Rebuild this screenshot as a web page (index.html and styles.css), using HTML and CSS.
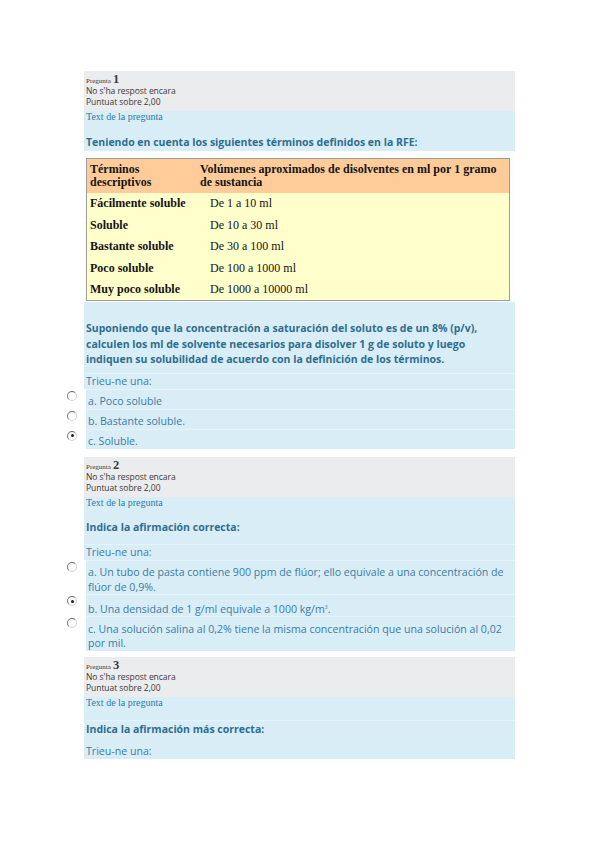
FILE: index.html
```html
<!DOCTYPE html>
<html lang="ca">
<head>
<meta charset="utf-8">
<title>Qüestionari</title>
<link rel="stylesheet" href="styles.css">
</head>
<body>
<div class="page">

  <section class="que q1">
    <div class="info">
      <div class="qno"><span class="lbl">Pregunta</span> <span class="num">1</span></div>
      <div class="state">No s'ha respost encara</div>
      <div class="grade">Puntuat sobre 2,00</div>
    </div>
    <div class="content">
      <div class="qtitle">Text de la pregunta</div>
      <p class="qtext lead">Teniendo en cuenta los siguientes términos definidos en la RFE:</p>
      <div class="tablewrap">
        <table class="sol">
          <thead>
            <tr><th class="c1">Términos descriptivos</th><th class="c2">Volúmenes aproximados de disolventes en ml por 1 gramo de sustancia</th></tr>
          </thead>
          <tbody>
            <tr><th class="c1">Fácilmente soluble</th><td>De 1 a 10 ml</td></tr>
            <tr><th class="c1">Soluble</th><td>De 10 a 30 ml</td></tr>
            <tr><th class="c1">Bastante soluble</th><td>De 30 a 100 ml</td></tr>
            <tr><th class="c1">Poco soluble</th><td>De 100 a 1000 ml</td></tr>
            <tr><th class="c1">Muy poco soluble</th><td>De 1000 a 10000 ml</td></tr>
          </tbody>
        </table>
      </div>
      <p class="qtext long">Suponiendo que la concentración a saturación del soluto es de un 8% (p/v), calculen los ml de solvente necesarios para disolver 1 g de soluto y luego indiquen su solubilidad de acuerdo con la definición de los términos.</p>
      <div class="prompt sep p1">Trieu-ne una:</div>
    </div>
    <div class="answers">
      <div class="opt"><span class="rb"><span class="radio"></span></span><span class="lab">a. Poco soluble</span></div>
      <div class="opt"><span class="rb"><span class="radio"></span></span><span class="lab">b. Bastante soluble.</span></div>
      <div class="opt"><span class="rb"><span class="radio on"></span></span><span class="lab">c. Soluble.</span></div>
    </div>
  </section>

  <section class="que q2">
    <div class="info">
      <div class="qno"><span class="lbl">Pregunta</span> <span class="num">2</span></div>
      <div class="state">No s'ha respost encara</div>
      <div class="grade">Puntuat sobre 2,00</div>
    </div>
    <div class="content">
      <div class="qtitle">Text de la pregunta</div>
      <p class="qtext lead2">Indica la afirmación correcta:</p>
      <div class="prompt sep p2">Trieu-ne una:</div>
    </div>
    <div class="answers">
      <div class="opt"><span class="rb"><span class="radio"></span></span><span class="lab">a. Un tubo de pasta contiene 900 ppm de flúor; ello equivale a una concentración de flúor de 0,9%.</span></div>
      <div class="opt"><span class="rb"><span class="radio on"></span></span><span class="lab">b. Una densidad de 1 g/ml equivale a 1000 kg/m<sup>3</sup>.</span></div>
      <div class="opt"><span class="rb"><span class="radio"></span></span><span class="lab">c. Una solución salina al 0,2% tiene la misma concentración que una solución al 0,02 por mil.</span></div>
    </div>
  </section>

  <section class="que q3">
    <div class="info">
      <div class="qno"><span class="lbl">Pregunta</span> <span class="num">3</span></div>
      <div class="state">No s'ha respost encara</div>
      <div class="grade">Puntuat sobre 2,00</div>
    </div>
    <div class="content">
      <div class="qtitle">Text de la pregunta</div>
      <p class="qtext lead3 sep">Indica la afirmación más correcta:</p>
      <div class="prompt p3">Trieu-ne una:</div>
    </div>
  </section>

</div>
</body>
</html>
```

FILE: styles.css
```css
html, body {
  margin: 0;
  padding: 0;
  background: #ffffff;
}

.page {
  padding: 71px 0 40px 84px;
  width: 431px;
  font-family: "Open Sans", "Noto Sans", sans-serif;
}

.que {
  margin-bottom: 8px;
}

.q2 {
  margin-bottom: 6px;
}

.info {
  background: #ebecee;
  height: 40px;
  box-sizing: border-box;
  padding: 2px 0 0 2px;
  color: #3a3a3a;
  font-size: 8.5px;
  line-height: 11px;
  letter-spacing: -0.05px;
}

.qno {
  height: 12px;
  line-height: 12px;
  font-family: "Liberation Serif", "DejaVu Serif", serif;
  letter-spacing: 0;
}

.qno .lbl {
  font-size: 7px;
}

.qno .num {
  font-size: 12.5px;
  font-weight: bold;
}

.content {
  background: #d9edf7;
  padding: 0 0 0 2px;
  color: #2e6f92;
}

.qtitle {
  font-family: "Liberation Serif", "DejaVu Serif", serif;
  font-size: 10px;
  line-height: 12px;
  color: #2f7aa0;
}

.qtext {
  margin: 0;
  font-weight: bold;
  font-size: 10.5px;
  line-height: 15px;
  letter-spacing: 0;
  color: #2d6d90;
}

.lead {
  margin-top: 12px;
}

.lead2 {
  margin-top: 11px;
}

.lead3 {
  margin-top: 11px;
  padding-top: 1px;
}

.long {
  margin-top: 19px;
  line-height: 15.5px;
  padding-right: 12px;
}

.sep {
  border-top: 1px solid #e7f3fa;
}

.prompt {
  font-size: 10.6px;
  line-height: 15px;
  letter-spacing: 0;
  color: #3a7ca3;
}

.p1 {
  margin-top: 5px;
}

.p2 {
  margin-top: 9px;
}

.p3 {
  margin-top: 7px;
}

.tablewrap {
  margin: 1px 0 0 -2px;
  background: #fbfdfe;
  padding: 7px 5px 1px 2px;
}

.sol {
  width: 424px;
  border-collapse: collapse;
  border: 1px solid #9c9c9c;
  font-family: "Liberation Serif", "DejaVu Serif", serif;
  font-size: 12px;
  color: #141414;
}

.sol thead tr {
  background: #ffcc99;
}

.sol thead th {
  height: 34px;
  padding: 0 3px;
  line-height: 13px;
  text-align: left;
  vertical-align: middle;
  font-size: 12px;
}

.sol thead th.c1 {
  width: 104px;
}

.sol tbody tr {
  background: #ffffcc;
  height: 21.6px;
}

.sol tbody th {
  text-align: left;
  padding: 0 3px;
  font-weight: bold;
}

.sol tbody td {
  padding: 0 3px 0 13px;
}

.answers {
  margin-left: -18px;
}

.opt {
  display: grid;
  grid-template-columns: 20px 1fr;
}

.rb {
  background: #ffffff;
}

.lab {
  background: #d9edf7;
  border-top: 1px solid #e7f3fa;
  padding: 4.5px 8px 0 2px;
  font-size: 10.6px;
  line-height: 14.5px;
  letter-spacing: 0;
  color: #3a7ca3;
}

.lab sup {
  font-size: 5px;
  vertical-align: 4px;
}

.radio {
  display: block;
  box-sizing: border-box;
  width: 10px;
  height: 10px;
  margin: 2px 0 0 1px;
  border-radius: 50%;
  border: 1px solid #9a9a9a;
  border-top-color: #6e6e6e;
  border-left-color: #7a7a7a;
  border-bottom-color: #d2d2d2;
  border-right-color: #cfcfcf;
  background: radial-gradient(circle at 60% 60%, #ffffff 40%, #ececec 100%);
  position: relative;
}

.radio.on::after {
  content: "";
  position: absolute;
  left: 2.5px;
  top: 2.5px;
  width: 3px;
  height: 3px;
  border-radius: 50%;
  background: #1a1a1a;
}
```
